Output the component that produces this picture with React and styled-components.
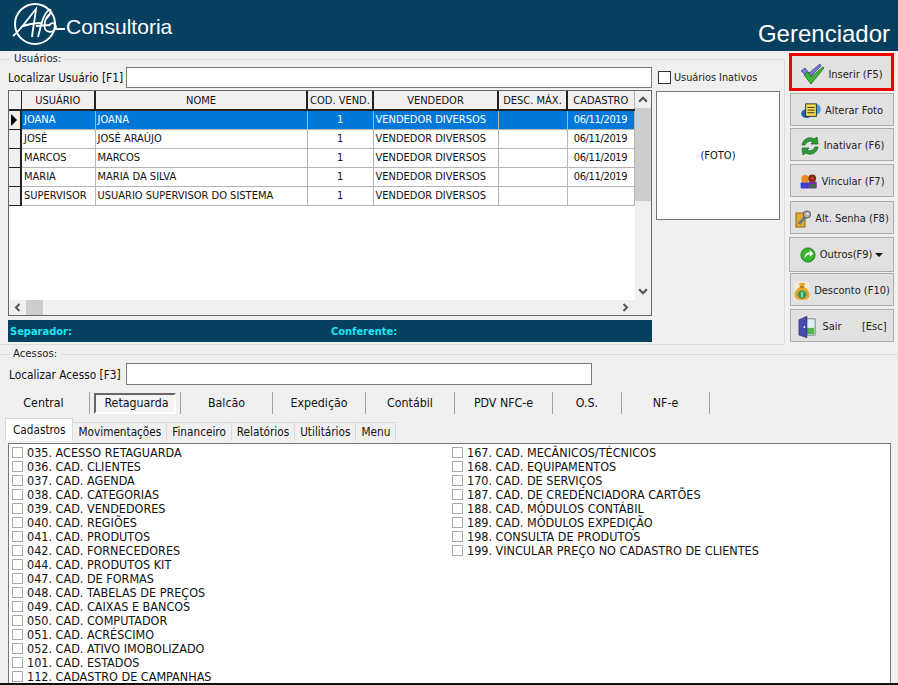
import React from 'react'
import styled, { createGlobalStyle } from 'styled-components'

const FONT = `"DejaVu Sans", "Liberation Sans", Arial, sans-serif`

const users = [
  { user: 'JOANA', name: 'JOANA', date: '06/11/2019', selected: true },
  { user: 'JOSÉ', name: 'JOSÉ ARAÚJO', date: '06/11/2019' },
  { user: 'MARCOS', name: 'MARCOS', date: '06/11/2019' },
  { user: 'MARIA', name: 'MARIA DA SILVA', date: '06/11/2019' },
  { user: 'SUPERVISOR', name: 'USUARIO SUPERVISOR DO SISTEMA', date: '' },
]

const modules = ['Central', 'Retaguarda', 'Balcão', 'Expedição', 'Contábil', 'PDV NFC-e', 'O.S.', 'NF-e']
const moduleWidths = [86, 91, 92, 93, 89, 98, 69, 88]
const tabs = ['Cadastros', 'Movimentações', 'Financeiro', 'Relatórios', 'Utilitários', 'Menu']

const leftAccess = [
  '035. ACESSO RETAGUARDA', '036. CAD. CLIENTES', '037. CAD. AGENDA', '038. CAD. CATEGORIAS',
  '039. CAD. VENDEDORES', '040. CAD. REGIÕES', '041. CAD. PRODUTOS', '042. CAD. FORNECEDORES',
  '044. CAD. PRODUTOS KIT', '047. CAD. DE FORMAS', '048. CAD. TABELAS DE PREÇOS', '049. CAD. CAIXAS E BANCOS',
  '050. CAD. COMPUTADOR', '051. CAD. ACRÉSCIMO', '052. CAD. ATIVO IMOBOLIZADO', '101. CAD. ESTADOS',
  '112. CADASTRO DE CAMPANHAS',
]
const rightAccess = [
  '167. CAD. MECÂNICOS/TÉCNICOS', '168. CAD. EQUIPAMENTOS', '170. CAD. DE SERVIÇOS',
  '187. CAD. DE CREDENCIADORA CARTÕES', '188. CAD. MÓDULOS CONTÁBIL', '189. CAD. MÓDULOS EXPEDIÇÃO',
  '198. CONSULTA DE PRODUTOS', '199. VINCULAR PREÇO NO CADASTRO DE CLIENTES',
]

function LogoMark() {
  return (
    <svg width="66" height="46" viewBox="0 0 66 46" fill="none" stroke="#fff">
      <circle cx="27" cy="22" r="20" strokeWidth="2" />
      <path d="M5 34 C13 28 21 15 28 7 C27 16 25 26 24 35 M13 25 C20 22 28 21 34 21" strokeWidth="1.8" />
      <path d="M30 35 C33 24 35 12 41 8 C44 6 43 13 38 17 M28 24 L42 23" strokeWidth="1.8" />
      <path d="M42 12 C36 16 35 27 39 29 C43 31 47 29 48 25 C47 20 43 20 41 24 M47 27 L57 27" strokeWidth="1.8" />
    </svg>
  )
}

function CheckIcon() {
  return (
    <svg width="24" height="22" viewBox="0 0 24 22">
      <path d="M1 8 L5 5 L9 10 L20 1 L21 3 L9 15 Z" fill="#7a78cf" stroke="#45468f" strokeWidth=".8" />
      <path d="M4 12 L8 9 L11 14 L23 4 L24 5 L11 21 Z" fill="#3fb53a" stroke="#1d6a1d" strokeWidth=".8" />
    </svg>
  )
}

function NoteIcon() {
  return (
    <svg width="20" height="16" viewBox="0 0 22 18">
      <ellipse cx="17" cy="7" rx="5" ry="6" fill="#4d9be0" />
      <ellipse cx="6" cy="12" rx="6" ry="5" fill="#1f5fb5" />
      <rect x="5" y="1" width="12" height="14" fill="#f5e04a" stroke="#222" />
      <path d="M7 5h8M7 8h8M7 11h8" stroke="#222" />
    </svg>
  )
}

function RefreshIcon() {
  return (
    <svg width="20" height="20" viewBox="0 0 20 20" fill="#2f9b36" stroke="#13611b" strokeWidth=".7">
      <path d="M2 9 C3 3 9 0 14 3 L17 1 L18 8 L11 8 L13 6 C10 4 6 6 5 9 Z" />
      <path d="M18 11 C17 17 11 20 6 17 L3 19 L2 12 L9 12 L7 14 C10 16 14 14 15 11 Z" />
    </svg>
  )
}

function PeopleIcon() {
  return (
    <svg width="18" height="15" viewBox="0 0 28 22">
      <rect x="1" y="12" width="13" height="10" rx="2" fill="#3a3fd0" />
      <rect x="13" y="11" width="13" height="11" rx="2" fill="#7b2fa8" />
      <rect x="16" y="15" width="8" height="6" fill="#2c7a33" />
      <circle cx="8" cy="7" r="6" fill="#ef8b1d" />
      <circle cx="19" cy="6" r="6" fill="#7c2a12" />
      <circle cx="19" cy="6" r="2.5" fill="#c4461c" />
    </svg>
  )
}

function KeyIcon() {
  return (
    <svg width="16" height="18" viewBox="0 0 16 18">
      <rect x="1" y="3" width="9" height="14" fill="#e0ac35" stroke="#8f6613" />
      <path d="M4 14 L11 6" stroke="#777" strokeWidth="3" />
      <circle cx="12" cy="4.5" r="3.6" fill="#b5b5b5" stroke="#555" />
      <circle cx="12.6" cy="4" r="1.1" fill="#eee" />
    </svg>
  )
}

function GoIcon() {
  return (
    <svg width="16" height="16" viewBox="0 0 18 18">
      <circle cx="9" cy="9" r="8" fill="#38b52f" stroke="#1b7a1d" />
      <path d="M5 13 C5 8 8 6 11 6 L11 3.5 L15 7.5 L11 11 L11 8.5 C9 8.5 7 9.5 5 13 Z" fill="#fff" />
    </svg>
  )
}

function MoneyIcon() {
  return (
    <svg width="16" height="18" viewBox="0 0 16 18">
      <rect width="16" height="18" fill="#efeadc" />
      <path d="M5 1 H11 L10 5 C14 7 16 11 15.5 14 C15 17 12 18 8 18 C4 18 1 17 .5 14 C0 11 2 7 6 5 Z" fill="#e8a62d" />
      <path d="M6 5 H10" stroke="#8a5a12" />
      <ellipse cx="8" cy="12.5" rx="4.5" ry="4" fill="#2f9e58" />
      <path d="M8 10 V15" stroke="#fff" />
    </svg>
  )
}

function DoorIcon() {
  return (
    <svg width="18" height="24" viewBox="0 0 20 24">
      <rect x="8" y="3" width="11" height="18" fill="#dff0f7" stroke="#333" strokeWidth=".6" />
      <rect x="9" y="13" width="9" height="7" fill="#54b548" />
      <path d="M1 4 L10 0 V24 L1 21 Z" fill="#4b4bb3" stroke="#23235f" strokeWidth=".6" />
      <circle cx="7" cy="12" r="1" fill="#fff" />
    </svg>
  )
}

const actions = [
  { id: 'ins', icon: <CheckIcon />, label: 'Inserir (F5)', height: 38, top: 0, drop: 4, focused: true },
  { id: 'foto', icon: <NoteIcon />, label: 'Alterar Foto', height: 33, top: 2, drop: 2 },
  { id: 'ina', icon: <RefreshIcon />, label: 'Inativar (F6)', height: 33, top: 2, drop: 2 },
  { id: 'vin', icon: <PeopleIcon />, label: 'Vincular (F7)', height: 33, top: 3, drop: 2 },
  { id: 'sen', icon: <KeyIcon />, label: 'Alt. Senha (F8)', height: 33, top: 4, drop: 2 },
  { id: 'out', icon: <GoIcon />, label: 'Outros(F9)', height: 35, top: 3, drop: 0, menu: true },
  { id: 'des', icon: <MoneyIcon />, label: 'Desconto (F10)', height: 33, top: 1, drop: 2 },
  { id: 'sai', icon: <DoorIcon />, label: 'Sair', height: 33, top: 3, drop: 2, esc: true },
]

export default function App() {
  return (
    <>
      <GlobalStyle />
      <Page>
        <Header>
          <Brand>
            <LogoMark />
            <BrandName>Consultoria</BrandName>
          </Brand>
          <Title>Gerenciador</Title>
        </Header>

        <TopArea>
          <UsersGroup>
            <Legend>Usuários:</Legend>
            <SearchRow>
              <SearchLabel>Localizar Usuário [F1]</SearchLabel>
              <UserSearch type="text" readOnly />
              <InactiveCheck>
                <Box />
                Usuários Inativos
              </InactiveCheck>
            </SearchRow>
            <GridRow>
              <GridFrame>
                <GridMain>
                  <GridBody>
                    <GridTable>
                      <colgroup>
                        <col width="12" />
                        <col width="74" />
                        <col width="212" />
                        <col width="66" />
                        <col width="125" />
                        <col width="69" />
                        <col width="67" />
                      </colgroup>
                      <thead>
                        <tr>
                          <HeadCell />
                          <HeadCell>USUÁRIO</HeadCell>
                          <HeadCell>NOME</HeadCell>
                          <HeadCell>COD. VEND.</HeadCell>
                          <HeadCell>VENDEDOR</HeadCell>
                          <HeadCell>DESC. MÁX.</HeadCell>
                          <HeadCell>CADASTRO</HeadCell>
                        </tr>
                      </thead>
                      <tbody>
                        {users.map((u) => (
                          <tr key={u.user}>
                            <MarkerCell>{u.selected && <Marker />}</MarkerCell>
                            <Cell $selected={u.selected}>{u.user}</Cell>
                            <Cell $selected={u.selected}>{u.name}</Cell>
                            <Cell $selected={u.selected} $center>1</Cell>
                            <Cell $selected={u.selected}>VENDEDOR DIVERSOS</Cell>
                            <Cell $selected={u.selected} />
                            <Cell $selected={u.selected} $center>{u.date}</Cell>
                          </tr>
                        ))}
                      </tbody>
                    </GridTable>
                  </GridBody>
                  <VScroll>
                    <Chevron viewBox="0 0 9 6"><path d="M1 5 L4.5 1.5 L8 5" /></Chevron>
                    <VThumb />
                    <VSpacer />
                    <Chevron viewBox="0 0 9 6"><path d="M1 1 L4.5 4.5 L8 1" /></Chevron>
                  </VScroll>
                </GridMain>
                <HScroll>
                  <Chevron viewBox="0 0 6 9" $side><path d="M5 1 L1.5 4.5 L5 8" /></Chevron>
                  <HThumb />
                  <HSpacer />
                  <Chevron viewBox="0 0 6 9" $side><path d="M1 1 L4.5 4.5 L1 8" /></Chevron>
                </HScroll>
              </GridFrame>
              <Photo>(FOTO)</Photo>
            </GridRow>
            <StatusBar>
              <StatusLabel $width={321}>Separador:</StatusLabel>
              <StatusLabel>Conferente:</StatusLabel>
            </StatusBar>
          </UsersGroup>

          <Actions>
            {actions.map((a) => (
              <ActionButton key={a.id} $height={a.height} $top={a.top} $drop={a.drop} $focused={a.focused} $wide={a.menu}>
                {a.icon}
                {a.esc ? (
                  <ExitLabel><span>{a.label}</span><span>[Esc]</span></ExitLabel>
                ) : (
                  <span>{a.label}</span>
                )}
                {a.menu && <Caret />}
              </ActionButton>
            ))}
          </Actions>
        </TopArea>

        <AccessGroup>
          <Legend $indent>Acessos:</Legend>
          <AccessSearchRow>
            <SearchLabel>Localizar Acesso [F3]</SearchLabel>
            <AccessSearch type="text" readOnly />
          </AccessSearchRow>
          <ModuleBar>
            {modules.map((m, i) => (
              <ModuleSlot key={m} style={{ width: moduleWidths[i] }}>
                <ModuleButton $active={m === 'Retaguarda'}>{m}</ModuleButton>
              </ModuleSlot>
            ))}
          </ModuleBar>
          <TabStrip>
            {tabs.map((t, i) => (
              <Tab key={t} $active={i === 0}>{t}</Tab>
            ))}
          </TabStrip>
          <AccessList>
            <AccessColumn>
              {leftAccess.map((a) => (
                <AccessItem key={a}><ItemBox />{a}</AccessItem>
              ))}
            </AccessColumn>
            <AccessColumn>
              {rightAccess.map((a) => (
                <AccessItem key={a}><ItemBox />{a}</AccessItem>
              ))}
            </AccessColumn>
          </AccessList>
        </AccessGroup>
      </Page>
    </>
  )
}

const GlobalStyle = createGlobalStyle`
  html, body {
    margin: 0;
    padding: 0;
    background: #f0f0f0;
  }
  * {
    box-sizing: border-box;
  }
`

const Page = styled.div`
  width: 898px;
  height: 685px;
  overflow: hidden;
  display: flex;
  flex-direction: column;
  background: #f0f0f0;
  font-family: ${FONT};
  font-stretch: condensed;
  font-size: 11px;
  color: #111;
  border-bottom: 2px solid #111;
`

const Header = styled.header`
  height: 51px;
  flex: none;
  display: flex;
  justify-content: space-between;
  background: #07405f;
  color: #fff;
  padding: 1px 8px 0 8px;
  font-family: "Liberation Sans", Arial, sans-serif;
  font-stretch: normal;
`

const Brand = styled.div`
  display: flex;
  align-items: center;
  height: 47px;
`

const BrandName = styled.span`
  font-size: 21px;
  margin-left: -8px;
  padding-top: 5px;
`

const Title = styled.div`
  align-self: flex-end;
  font-size: 24px;
  line-height: 28px;
  padding-bottom: 3px;
`

const TopArea = styled.div`
  height: 297px;
  flex: none;
  display: flex;
  align-items: flex-start;
  padding-top: 2px;
`

const Group = styled.fieldset`
  margin: 0;
  padding: 0;
  min-width: 0;
  border: 1px solid #dcdcdc;
`

const UsersGroup = styled(Group)`
  width: 785px;
  height: 292px;
  padding: 0 0 0 8px;
  border-left: 0;
`

const Legend = styled.legend`
  margin-left: ${(p) => (p.$indent ? '6px' : '3px')};
  padding: 0 3px;
  font-size: 11.3px;
  line-height: 12px;
  color: #222;
`

const SearchRow = styled.div`
  display: flex;
  align-items: center;
  height: 20px;
  margin-top: 2px;
`

const SearchLabel = styled.label`
  width: 118px;
  flex: none;
  padding-top: 1px;
  white-space: nowrap;
  font-size: 11.8px;
`

const TextInput = styled.input`
  height: 21px;
  border: 1px solid #7a7a7a;
  background: #fff;
  outline: none;
`

const UserSearch = styled(TextInput)`
  width: 526px;
`

const InactiveCheck = styled.label`
  display: flex;
  align-items: center;
  gap: 3px;
  margin-left: 6px;
  font-size: 10.8px;
  color: #222;
`

const Box = styled.span`
  width: 13px;
  height: 13px;
  background: #fff;
  border: 1px solid #333;
`

const GridRow = styled.div`
  display: flex;
  gap: 4px;
  margin-top: 3px;
`

const GridFrame = styled.div`
  width: 644px;
  height: 226px;
  border: 1px solid #666;
  display: flex;
  flex-direction: column;
  background: #f0f0f0;
`

const GridMain = styled.div`
  flex: 1;
  display: flex;
  min-height: 0;
`

const GridBody = styled.div`
  width: 626px;
  flex: none;
  background: #fff;
`

const GridTable = styled.table`
  width: 625px;
  table-layout: fixed;
  border-collapse: collapse;
`

const HeadCell = styled.th`
  height: 19px;
  padding: 0;
  font-weight: normal;
  text-align: center;
  background: #f0f0f0;
  border-right: 2px solid #222;
  border-bottom: 2px solid #222;
  white-space: nowrap;
  overflow: hidden;

  &:first-child {
    border-right-width: 1px;
  }

  &:last-child {
    border-right: 1px solid #b5b5b5;
  }
`

const MarkerCell = styled.td`
  height: 19px;
  padding: 0 0 0 2px;
  background: #f0f0f0;
  border-right: 2px solid #222;
  border-bottom: 1px solid #222;
`

const Marker = styled.span`
  display: block;
  width: 0;
  height: 0;
  border-top: 6px solid transparent;
  border-bottom: 6px solid transparent;
  border-left: 6px solid #000;
`

const Cell = styled.td`
  height: 19px;
  padding: 0 2px;
  white-space: nowrap;
  overflow: hidden;
  letter-spacing: ${(p) => (p.$center ? '-0.35px' : '0')};
  text-align: ${(p) => (p.$center ? 'center' : 'left')};
  background: ${(p) => (p.$selected ? '#0078d7' : '#fff')};
  color: ${(p) => (p.$selected ? '#fff' : '#111')};
  border-right: 1px solid #b5b5b5;
  border-bottom: 1px solid #b5b5b5;
`

const VScroll = styled.div`
  width: 16px;
  flex: none;
  display: flex;
  flex-direction: column;
`

const Chevron = styled.svg`
  flex: none;
  width: ${(p) => (p.$side ? '17px' : '16px')};
  height: ${(p) => (p.$side ? '15px' : '17px')};
  padding: ${(p) => (p.$side ? '3px 5px' : '5px 3px')};
  fill: none;
  stroke: #555;
  stroke-width: 2;
`

const VThumb = styled.div`
  height: 93px;
  background: #cdcdcd;
`

const VSpacer = styled.div`
  flex: 1;
`

const HScroll = styled.div`
  height: 15px;
  flex: none;
  display: flex;
  padding-right: 17px;
`

const HThumb = styled.div`
  width: 17px;
  background: #cdcdcd;
`

const HSpacer = styled.div`
  flex: 1;
`

const Photo = styled.div`
  width: 124px;
  height: 129px;
  margin-top: 1px;
  display: flex;
  align-items: center;
  justify-content: center;
  background: #fff;
  border: 1px solid #777;
`

const StatusBar = styled.div`
  width: 644px;
  height: 22px;
  margin-top: 4px;
  display: flex;
  align-items: center;
  padding-left: 2px;
  background: #07405f;
`

const StatusLabel = styled.span`
  width: ${(p) => (p.$width ? `${p.$width}px` : 'auto')};
  font-weight: bold;
  color: #19e6ee;
`

const Actions = styled.div`
  width: 106px;
  margin-left: 4px;
  display: flex;
  flex-direction: column;
`

const ActionButton = styled.button`
  height: ${(p) => p.$height}px;
  width: ${(p) => (p.$focused || p.$wide ? '105px' : '104px')};
  margin: ${(p) => p.$top}px 0 0 ${(p) => (p.$focused || p.$wide ? '0' : '1px')};
  display: flex;
  align-items: center;
  justify-content: center;
  gap: 4px;
  padding: ${(p) => p.$drop}px 0 0 0;
  font-family: ${FONT};
  font-stretch: condensed;
  font-size: 11px;
  white-space: nowrap;
  color: #222;
  background: #e1e1e1;
  border: ${(p) => (p.$focused ? '3px solid #ee0000' : '1px solid #adadad')};
`

const ExitLabel = styled.span`
  width: 64px;
  margin-left: 3px;
  display: flex;
  justify-content: space-between;
`

const Caret = styled.span`
  width: 0;
  height: 0;
  margin-left: -1px;
  border-left: 4px solid transparent;
  border-right: 4px solid transparent;
  border-top: 4px solid #111;
`

const AccessGroup = styled(Group)`
  flex: 1;
  min-height: 0;
  padding: 0 8px 0 4px;
  border-left: 0;
  border-right: 0;
  border-bottom: 0;
`

const AccessSearchRow = styled.div`
  display: flex;
  align-items: center;
  height: 22px;
  margin-top: 3px;
  padding-left: 5px;
`

const AccessSearch = styled(TextInput)`
  width: 466px;
  height: 22px;
  margin-left: -1px;
`

const ModuleBar = styled.div`
  display: flex;
  height: 22px;
  margin-top: 7px;
`

const ModuleSlot = styled.div`
  display: flex;
  align-items: center;
  justify-content: center;
  border-right: 1px solid #a0a0a0;

  &:first-child {
    padding-right: 6px;
  }
`

const ModuleButton = styled.span`
  display: flex;
  align-items: center;
  justify-content: center;
  height: 21px;
  padding: ${(p) => (p.$active ? '0 5px 0 8px' : '0 7px')};
  font-size: 12.3px;
  background: ${(p) => (p.$active ? '#f4f4f4' : 'transparent')};
  border: ${(p) => (p.$active ? '2px solid' : '0')};
  border-color: #666 #fff #fff #666;
`

const TabStrip = styled.div`
  display: flex;
  align-items: flex-end;
  height: 23px;
  margin-top: 4px;
  padding-left: 2px;
`

const Tab = styled.div`
  height: ${(p) => (p.$active ? '23px' : '19px')};
  padding: 0 ${(p) => (p.$active ? '7px' : '5px')};
  display: flex;
  align-items: center;
  font-size: 11.7px;
  background: ${(p) => (p.$active ? '#fff' : '#f0f0f0')};
  border: 1px solid #d9d9d9;
  border-bottom: 0;
  margin-left: -1px;
`

const AccessList = styled.div`
  width: 883px;
  height: 240px;
  margin: 2px 0 0 4px;
  padding: 1px 3px;
  display: flex;
  overflow: hidden;
  background: #fff;
  border: 1px solid #777;
  border-bottom: 0;
`

const AccessColumn = styled.div`
  width: 440px;
  flex: none;
`

const AccessItem = styled.div`
  height: 14px;
  display: flex;
  align-items: center;
  gap: 4px;
  font-size: 12.5px;
  white-space: nowrap;
`

const ItemBox = styled.span`
  width: 11px;
  height: 11px;
  flex: none;
  border: 1px solid #aaa;
  background: #fff;
`
